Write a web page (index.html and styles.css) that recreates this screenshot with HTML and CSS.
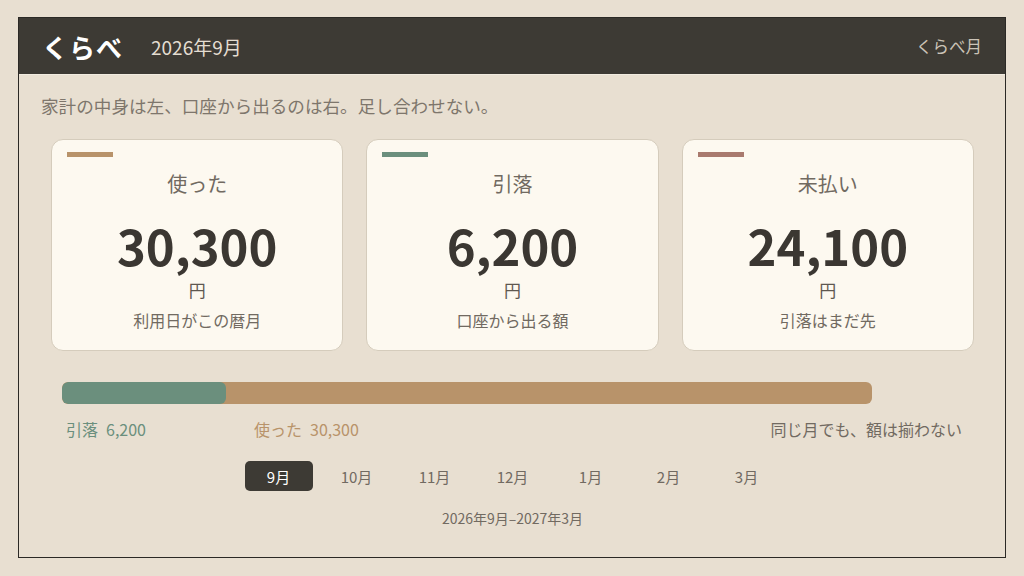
FILE: index.html
```html
<!DOCTYPE html>
<html lang="ja">
<head>
  <meta charset="UTF-8">
  <title>くらべ</title>
  <link rel="stylesheet" href="styles.css">
</head>
<body>
  <div class="frame">
    <div class="header">
      <span class="logo">くらべ</span>
      <span class="month">2026年9月</span>
      <span class="header-right">くらべ月</span>
    </div>

    <div class="content">
      <p class="lead">家計の中身は左、口座から出るのは右。足し合わせない。</p>

      <div class="cards">
        <div class="card">
          <div class="accent tan"></div>
          <div class="card-label">使った</div>
          <div class="card-num">30,300</div>
          <div class="card-unit">円</div>
          <div class="card-sub">利用日がこの暦月</div>
        </div>
        <div class="card">
          <div class="accent green"></div>
          <div class="card-label">引落</div>
          <div class="card-num">6,200</div>
          <div class="card-unit">円</div>
          <div class="card-sub">口座から出る額</div>
        </div>
        <div class="card">
          <div class="accent rose"></div>
          <div class="card-label">未払い</div>
          <div class="card-num">24,100</div>
          <div class="card-unit">円</div>
          <div class="card-sub">引落はまだ先</div>
        </div>
      </div>

      <div class="compare">
        <div class="bar">
          <div class="bar-fill" style="width:20.2%"></div>
        </div>
        <div class="bar-labels">
          <span class="lbl-green">引落<b>6,200</b></span>
          <span class="lbl-tan">使った<b>30,300</b></span>
          <span class="lbl-note">同じ月でも、額は揃わない</span>
        </div>
      </div>

      <div class="tabs">
        <button class="tab active">9月</button>
        <button class="tab">10月</button>
        <button class="tab">11月</button>
        <button class="tab">12月</button>
        <button class="tab">1月</button>
        <button class="tab">2月</button>
        <button class="tab">3月</button>
      </div>

      <div class="range">2026年9月–2027年3月</div>
    </div>
  </div>
</body>
</html>
```

FILE: styles.css
```css
html, body { margin:0; padding:0; }
body {
  background:#e8dfd1;
  font-family:"Noto Sans CJK JP", "Noto Sans", sans-serif;
  padding:17px 18px 18px 18px;
  box-sizing:border-box;
  height:576px;
  overflow:hidden;
}
.frame {
  height:541px;
  border:1.5px solid #2b2925;
  box-sizing:border-box;
  background:#e8dfd1;
}
.header {
  display:flex; align-items:center;
  height:56px;
  background:#3d3a34;
  border-bottom:1px solid #f1ebe0;
  padding:0 23px;
}
.logo { color:#fff; font-size:26px; font-weight:700; letter-spacing:1px; }
.month { color:#e4ddd1; font-size:19px; margin-left:28px; }
.header-right { margin-left:auto; color:#cbc3b7; font-size:16.5px; }

.content { padding:19px 21px 0 22px; }
.lead { margin:0; font-size:17.6px; line-height:24px; color:#7e766c; }

.cards {
  display:flex; gap:23px;
  margin:21px 10px 0 10px;
}
.card {
  flex:1;
  background:#fdf9f0;
  border:1px solid #d5ccbc;
  border-radius:12px;
  padding:12px 15px 19px 15px;
  text-align:center;
}
.accent { width:46px; height:5px; }
.accent.tan { background:#b8936a; }
.accent.green { background:#6b8f7d; }
.accent.rose { background:#a97a6e; }
.card-label { margin-top:13px; font-size:20px; line-height:28px; color:#716a61; }
.card-num {
  margin-top:22px; font-size:49px; line-height:50px;
  font-weight:700; color:#3b3732;
}
.card-unit { margin-top:9px; font-size:17px; line-height:22px; color:#5f5850; }
.card-sub { margin-top:8px; font-size:16px; line-height:22px; color:#716a61; }

.compare { margin:31px 22px 0 21px; }
.bar {
  width:810px; height:22px;
  background:#b8936a;
  border-radius:6px;
  overflow:hidden;
}
.bar-fill { height:100%; background:#6b8f7d; border-radius:6px; }
.bar-labels {
  display:flex; margin-top:14px;
  padding:0 0 0 4px;
  font-size:16px; line-height:22px;
}
.bar-labels b { font-weight:400; margin-left:8px; }
.lbl-green { color:#6b8f7d; }
.lbl-tan { color:#b8936a; margin-left:108px; }
.lbl-note { color:#716a61; margin-left:auto; }

.tabs {
  display:flex; justify-content:center; gap:10px;
  margin-top:21px;
}
.tab {
  width:68px; height:30px;
  border:none; border-radius:5px;
  background:transparent;
  font-family:inherit; font-size:15px; color:#716a61;
  padding:0; cursor:pointer;
}
.tab.active { background:#3d3a34; color:#fff; }

.range {
  margin-top:18px; text-align:center;
  font-size:14px; line-height:18px; color:#716a61;
}
```
